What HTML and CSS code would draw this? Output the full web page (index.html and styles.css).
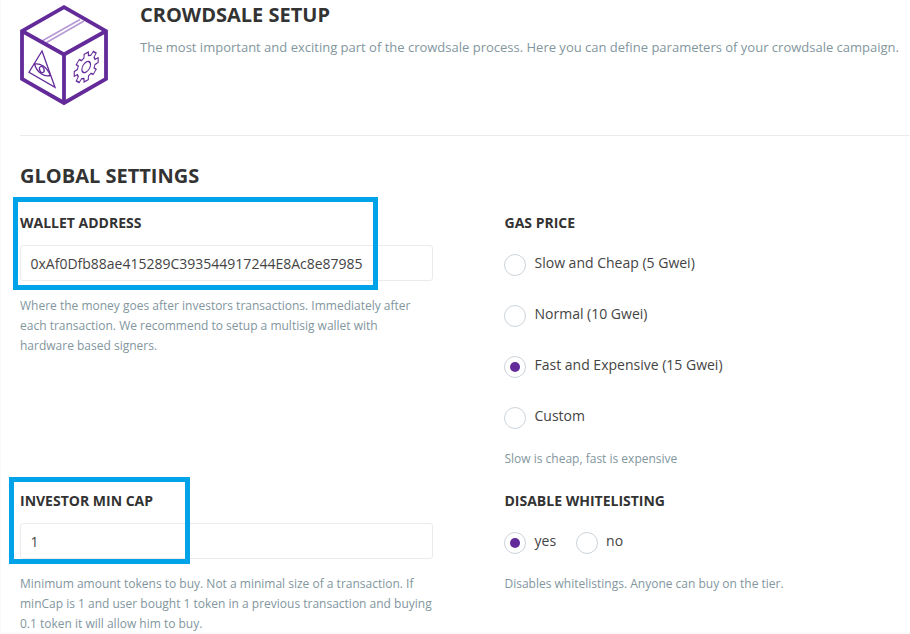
FILE: index.html
```html
<!DOCTYPE html>
<html lang="en">
<head>
<meta charset="utf-8">
<title>Crowdsale setup</title>
<link rel="stylesheet" href="styles.css">
</head>
<body>
<main class="page">
  <header class="intro">
    <svg class="logo" viewBox="0 0 128 110" fill="none" stroke="#632a9a">
      <g stroke="#b698d4" stroke-width="1.5"><path d="M42 41 80 19.5M46.500 42.500 84 21"/></g>
      <path stroke-width="3.800" d="M64 7.200 106 31V79L64 103 22 79V31ZM22 31 64 54.500 106 31M64 54.500V103"/>
      <g stroke-width="1.300">
        <path d="M42 51 29 72.200 55 87.300Z"/>
        <path d="M34.500 64C40 63 47 66.500 50.300 75.500 44.500 77 37 73 34.500 64Z"/>
        <ellipse cx="41.800" cy="69.500" rx="2.200" ry="3.200" transform="rotate(-20 41.800 69.500)"/>
        <g transform="matrix(.866 -.5 0 1 86.200 67)">
          <path d="M-2.600-10.200-2.400-13.800 2.400-13.800 2.600-10.200 5.400-9.100 8.100-11.500 11.500-8.100 9.100-5.400 10.200-2.600 13.800-2.400 13.800 2.400 10.200 2.600 9.100 5.400 11.500 8.100 8.100 11.500 5.400 9.100 2.600 10.200 2.400 13.800-2.400 13.800-2.600 10.200-5.400 9.100-8.100 11.500-11.500 8.100-9.100 5.400-10.200 2.600-13.800 2.400-13.800-2.400-10.200-2.600-9.100-5.400-11.500-8.100-8.100-11.500-5.400-9.100Z"/>
          <circle r="5"/>
        </g>
      </g>
    </svg>
    <div class="intro-text">
      <h1 class="title">CROWDSALE SETUP</h1>
      <p class="lead">The most important and exciting part of the crowdsale process. Here you can define parameters of your crowdsale campaign.</p>
    </div>
  </header>
  <section class="settings">
    <h2 class="title">GLOBAL SETTINGS</h2>
    <div class="grid">
      <div class="field">
        <h3 class="label">WALLET ADDRESS</h3>
        <div class="input">0xAf0Dfb88ae415289C393544917244E8Ac8e87985</div>
        <p class="help">Where the money goes after investors transactions. Immediately after<br>each transaction. We recommend to setup a multisig wallet with<br>hardware based signers.</p>
      </div>
      <div class="field">
        <h3 class="label">GAS PRICE</h3>
        <div class="radios stacked">
          <div class="radio"><i class="dot"></i><span>Slow and Cheap (5 Gwei)</span></div>
          <div class="radio"><i class="dot"></i><span>Normal (10 Gwei)</span></div>
          <div class="radio"><i class="dot on"></i><span>Fast and Expensive (15 Gwei)</span></div>
          <div class="radio"><i class="dot"></i><span>Custom</span></div>
        </div>
        <p class="help">Slow is cheap, fast is expensive</p>
      </div>
      <div class="field">
        <h3 class="label">INVESTOR MIN CAP</h3>
        <div class="input">1</div>
        <p class="help">Minimum amount tokens to buy. Not a minimal size of a transaction. If<br>minCap is 1 and user bought 1 token in a previous transaction and buying<br>0.1 token it will allow him to buy.</p>
      </div>
      <div class="field">
        <h3 class="label">DISABLE WHITELISTING</h3>
        <div class="radios">
          <div class="radio"><i class="dot on"></i><span>yes</span></div>
          <div class="radio"><i class="dot"></i><span>no</span></div>
        </div>
        <p class="help">Disables whitelistings. Anyone can buy on the tier.</p>
      </div>
    </div>
  </section>
  <div class="mark mark-wallet"></div>
  <div class="mark mark-cap"></div>
</main>
</body>
</html>
```
FILE: styles.css
```css
* { box-sizing: border-box; margin: 0; padding: 0; }
body { background: #fff; font-family: "Open Sans", sans-serif; }
.page {
  position: relative;
  width: 910px;
  height: 634px;
  overflow: hidden;
  border-left: 1px solid #fafafa;
  border-bottom: 2px solid #fafafa;
  white-space: nowrap;
}
.intro {
  display: flex;
  height: 136px;
  margin-left: 19px;
  border-bottom: 1px solid #ebebeb;
}
.logo { flex: none; width: 128px; height: 110px; margin-left: -20px; }
.intro-text { padding-left: 12px; }
.title { font-size: 20px; line-height: 30px; font-weight: 700; color: #333; }
.lead { margin-top: 7px; font-size: 13px; line-height: 20px; color: #82969e; }
.settings { padding: 25px 0 0 19px; }
.grid {
  display: grid;
  grid-template-columns: 413px 1fr;
  grid-template-rows: 278px auto;
  column-gap: 71.5px;
  margin-top: 22px;
}
.label { font-size: 14px; line-height: 20px; font-weight: 700; color: #333; }
.input {
  height: 36px;
  margin-top: 12px;
  padding-left: 9.5px;
  border: 1px solid #ebebeb;
  border-radius: 3px;
  font-size: 14px;
  line-height: 36px;
  color: #444;
}
.help { margin-top: 15px; font-size: 12px; line-height: 20px; color: #82969e; }
.radios { display: flex; gap: 20px; margin-top: 21px; margin-left: -0.5px; }
.stacked { flex-direction: column; gap: 29px; }
.radio { display: flex; gap: 8.5px; height: 22px; font-size: 14px; line-height: 18px; color: #444; }
.radio + .radio { margin-left: -0.5px; }
.stacked .radio + .radio { margin-left: 0; }
.dot {
  flex: none;
  display: grid;
  place-items: center;
  width: 22px;
  height: 22px;
  border: 1px solid #ccd4da;
  border-radius: 50%;
}
.on::after { content: ""; width: 10px; height: 10px; border-radius: 50%; background: #632a9a; }
.radios + .help { margin-top: 20px; }
.mark { position: absolute; border: 5px solid #00a2e8; }
.mark-wallet { left: 12px; top: 197px; width: 365px; height: 93px; }
.mark-cap { left: 8px; top: 477px; width: 181px; height: 87px; }
```
